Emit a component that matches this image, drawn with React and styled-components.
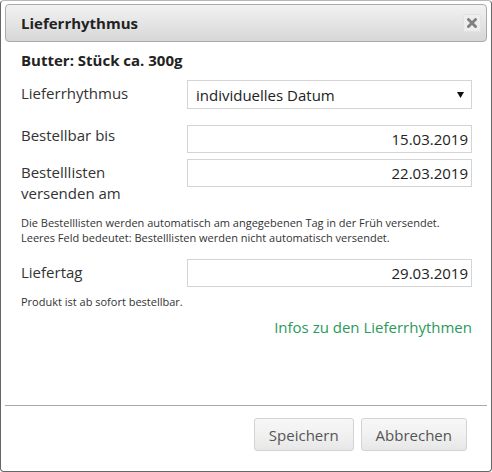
import React from "react";
import styled, { createGlobalStyle } from "styled-components";

const Global = createGlobalStyle`
  html, body { margin: 0; padding: 0; background: #fff; }
  body { font-family: "Open Sans", "Liberation Sans", sans-serif; color: #333; }
  * { box-sizing: border-box; }
`;

const Dialog = styled.div`
  width: 492px;
  height: 472px;
  border: 1px solid #666;
  border-top-color: #b8b8b8;
  border-radius: 4px;
  padding: 3px 4px 0 4px;
  background: #fff;
  display: flex;
  flex-direction: column;
`;

const TitleBar = styled.div`
  height: 38px;
  border: 1px solid #aaa;
  border-radius: 4px;
  background: linear-gradient(#f2f2f2, #d7d7d7);
  display: flex;
  align-items: center;
  justify-content: space-between;
  padding: 0 5px 0 15px;
`;

const Title = styled.span`
  font-size: 15px;
  font-weight: 700;
  color: #222;
`;

const CloseButton = styled.button`
  width: 18px;
  height: 18px;
  padding: 0;
  border: 1px solid #e2e2e2;
  border-radius: 2px;
  background: #ededed;
  display: flex;
  align-items: center;
  justify-content: center;
  cursor: pointer;
`;

const Content = styled.div`
  flex: 1;
  display: flex;
  flex-direction: column;
  padding: 8px 15px 0 16px;
`;

const Product = styled.div`
  font-size: 15px;
  line-height: 20px;
  font-weight: 700;
  color: #222;
`;

const Row = styled.div`
  display: grid;
  grid-template-columns: 166px 1fr;
  align-items: start;
  margin-top: ${(p) => p.$mt}px;
`;

const Label = styled.div`
  font-size: 15px;
  line-height: 20.5px;
  color: #333;
  padding-top: ${(p) => p.$offset}px;
  padding-right: 40px;
`;

const Field = styled.input`
  width: 100%;
  height: 28px;
  border: 1px solid #d4d4d4;
  background: #fff;
  font-family: "Open Sans", "Liberation Sans", sans-serif;
  font-size: 15px;
  color: #222;
  text-align: right;
  padding: 0 3px 0 6px;
  outline: none;
`;

const Select = styled.div`
  height: 29px;
  border: 1px solid #d4d4d4;
  background: #fff;
  display: flex;
  align-items: center;
  justify-content: space-between;
  padding: 0 7px 0 8px;
  font-size: 15px;
  color: #222;
`;

const Note = styled.div`
  font-size: 11px;
  line-height: 15px;
  color: #333;
  margin-top: ${(p) => p.$mt}px;
`;

const LinkRow = styled.div`
  display: flex;
  justify-content: flex-end;
  margin-top: 8px;
`;

const InfoLink = styled.a`
  font-size: 15px;
  line-height: 20px;
  color: #2a9a5c;
  text-decoration: none;
  cursor: pointer;
`;

const ButtonPane = styled.div`
  border-top: 1px solid #a8a8a8;
  height: 66px;
  display: flex;
  justify-content: flex-end;
  align-items: flex-start;
  gap: 7px;
  padding: 12px 20px 0 0;
`;

const Button = styled.button`
  height: 33px;
  padding: 0 ${(p) => p.$px}px;
  border: 1px solid #d3d3d3;
  border-radius: 3px;
  background: linear-gradient(#f7f7f7 0%, #f1f1f1 50%, #e7e7e7 100%);
  font-family: "Open Sans", "Liberation Sans", sans-serif;
  font-size: 15px;
  color: #555;
  cursor: pointer;
`;

export default function App() {
  return (
    <>
      <Global />
      <Dialog>
        <TitleBar>
          <Title>Lieferrhythmus</Title>
          <CloseButton aria-label="close">
            <svg width="10" height="10" viewBox="0 0 10 10">
              <path d="M1.5 1.5 L8.5 8.5 M8.5 1.5 L1.5 8.5" stroke="#808080" strokeWidth="2.8" strokeLinecap="square" />
            </svg>
          </CloseButton>
        </TitleBar>
        <Content>
          <Product>Butter: Stück ca. 300g</Product>
          <Row $mt={10}>
            <Label $offset={3}>Lieferrhythmus</Label>
            <Select>
              <span>individuelles Datum</span>
              <svg width="7" height="6" viewBox="0 0 7 6">
                <path d="M0 0 L7 0 L3.5 6 Z" fill="#111" />
              </svg>
            </Select>
          </Row>
          <Row $mt={16}>
            <Label $offset={0}>Bestellbar bis</Label>
            <Field readOnly value="15.03.2019" />
          </Row>
          <Row $mt={6}>
            <Label $offset={3}>Bestelllisten versenden am</Label>
            <Field readOnly value="22.03.2019" />
          </Row>
          <Note $mt={12}>
            Die Bestelllisten werden automatisch am angegebenen Tag in der Früh versendet.
            <br />
            Leeres Feld bedeutet: Bestelllisten werden nicht automatisch versendet.
          </Note>
          <Row $mt={14}>
            <Label $offset={3}>Liefertag</Label>
            <Field readOnly value="29.03.2019" />
          </Row>
          <Note $mt={7}>Produkt ist ab sofort bestellbar.</Note>
          <LinkRow>
            <InfoLink>Infos zu den Lieferrhythmen</InfoLink>
          </LinkRow>
        </Content>
        <ButtonPane>
          <Button $px={14}>Speichern</Button>
          <Button $px={14}>Abbrechen</Button>
        </ButtonPane>
      </Dialog>
    </>
  );
}
